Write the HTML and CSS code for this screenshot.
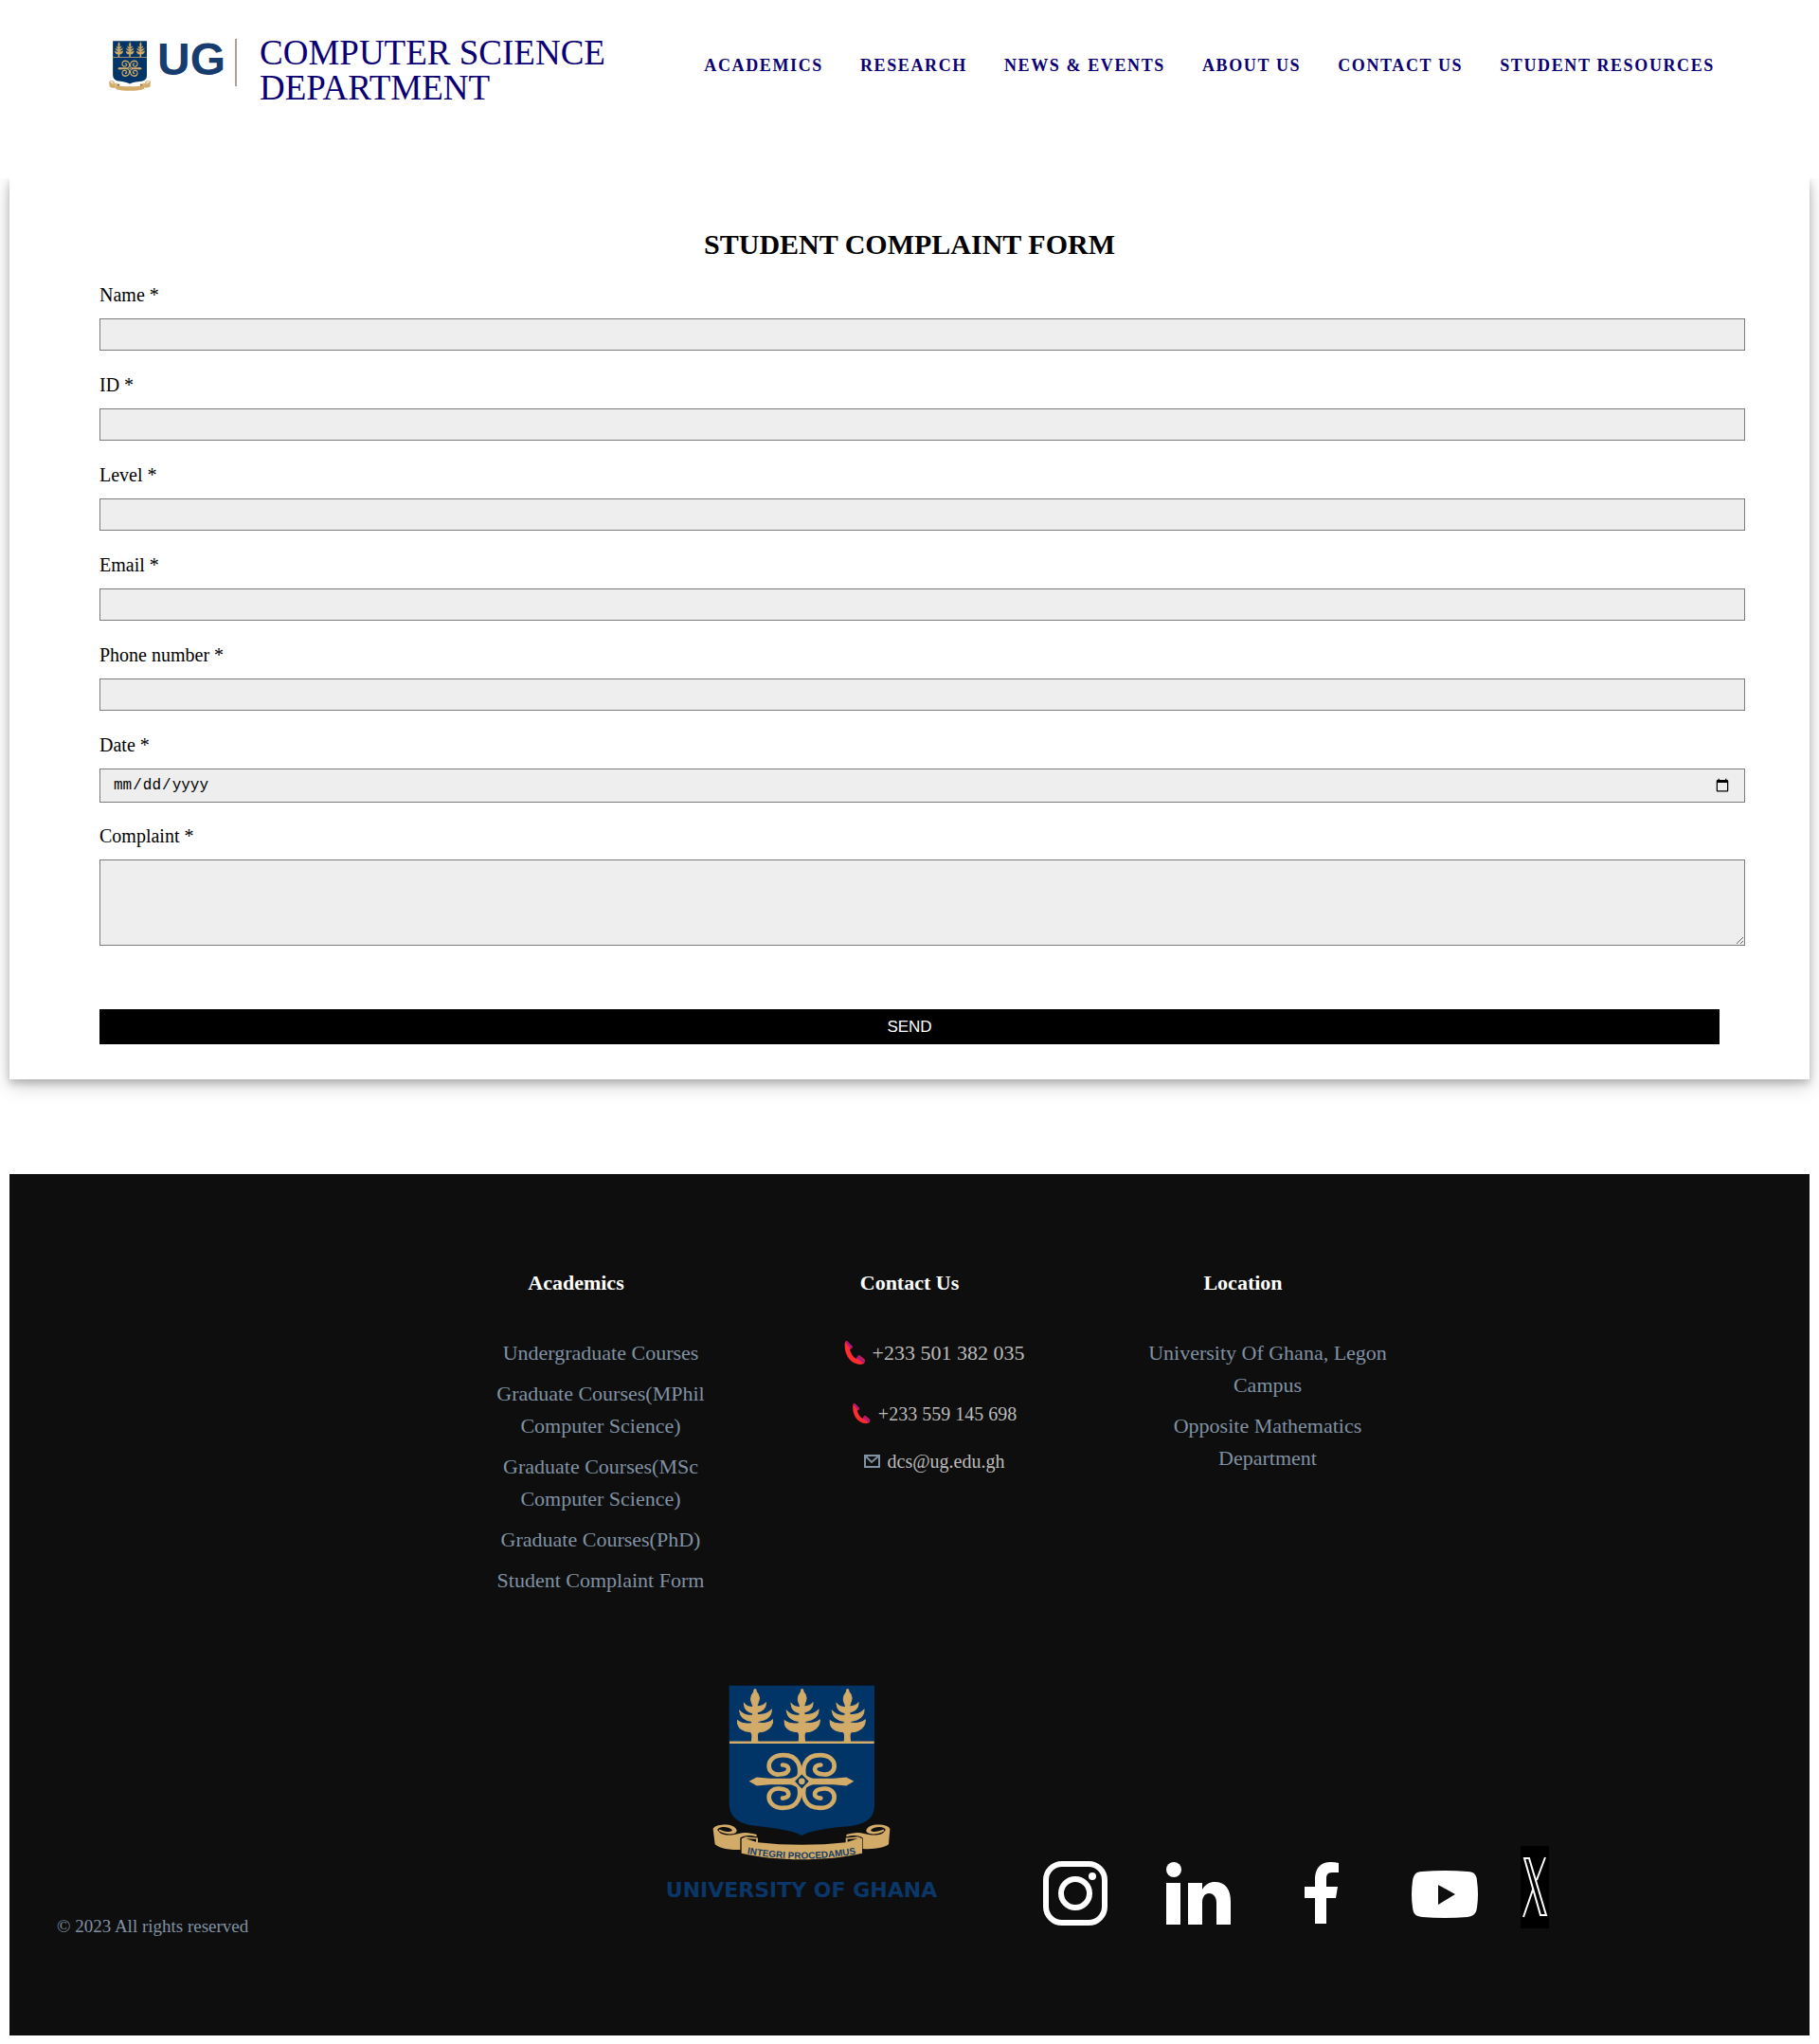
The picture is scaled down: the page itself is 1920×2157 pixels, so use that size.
FILE: index.html
```html
<!DOCTYPE html>
<html lang="en">
<head>
<meta charset="utf-8">
<meta name="viewport" content="width=device-width, initial-scale=1">
<title>Student Complaint Form</title>
<link rel="stylesheet" href="styles.css">
</head>
<body>
<svg class="sprite" aria-hidden="true">
  <symbol id="tree" viewBox="0 0 114 168">
    <path stroke="#d2ab68" stroke-width="3" d="M57 0c3 0 4 5 4 9 8 8 11 18 8 27-2 8-5 13-6 20 10-1 21-4 28-12 1 16-10 25-27 30v8c16 0 33-3 45-16 0 20-17 32-43 36v5c15 3 34 1 48-10-1 24-20 38-44 39-8 1-6 18-4 32H46c2-15 4-32-5-33C18 134 1 124 0 99c14 10 31 13 47 9v-6C24 99 10 90 8 69c11 12 28 16 41 14v-7C34 73 23 63 22 46c7 8 18 12 29 12-1-8-6-15-7-23-1-9 2-17 9-25 0-5 1-10 4-10z"/>
  </symbol>
  <symbol id="crest" viewBox="218 54 564 554" preserveAspectRatio="none">
    <path class="shield" d="M271 56H731V432C731 476 706 492 655 500 588 506 530 513 501 530 470 513 416 508 348 499 296 490 271 470 271 425Z"/>
    <g class="gold">
      <use href="#tree" x="296" y="67" width="114" height="168"/>
      <use href="#tree" x="445" y="67" width="114" height="168"/>
      <use href="#tree" x="589" y="67" width="114" height="168"/>
      <path d="M272 232H730V240H272Z"/>
      <path d="M334 359L358 346 400 350H462C477 349 490 340 494 329H508C512 340 525 349 540 350H602L642 346 666 359 642 373 602 369H540C525 370 512 379 508 390H494C490 379 477 370 462 369H400L358 373Z"/>
    </g>
    <g class="scrolls">
      <path d="M492 345C499 318 494 276 442 276 382 276 386 341 430 337 470 334 464 306 440 307"/>
      <path d="M509 345C502 318 507 276 559 276 619 276 615 341 571 337 531 334 537 306 561 307"/>
      <path d="M492 374C499 401 494 443 442 443 382 443 386 378 430 382 470 385 464 413 440 412"/>
      <path d="M509 374C502 401 507 443 559 443 619 443 615 378 571 382 531 385 537 413 561 412"/>
    </g>
    <path class="shield" d="M501 337L523 359 501 382 479 359Z"/>
    <circle class="gold" cx="501" cy="359" r="10"/>
    <g class="gold">
      <path d="M220 510C222 492 290 488 295 514 296 528 262 530 238 516L240 511C260 520 284 520 280 512 270 500 236 500 234 512 244 534 280 530 302 524 322 518 342 523 358 527V534C336 528 318 528 306 538V575C270 576 240 570 226 558Z"/>
      <path d="M780 510C778 492 710 488 705 514 704 528 738 530 762 516L760 511C740 520 716 520 720 512 730 500 764 500 766 512 756 534 720 530 698 524 678 518 658 523 642 527V534C664 528 682 528 694 538V572C730 575 764 568 776 558Z"/>
      <path d="M310 540L324 534 362 538V552C450 562 552 562 640 552V538L678 534 692 540V586C580 612 420 612 310 586Z"/>
    </g>
    <path class="fold" d="M324 540L356 541V550Z M678 540L646 541V550Z"/>
  </symbol>
  <symbol id="handset" viewBox="0 0 22 26">
    <path fill="#ff2d2d" d="M1 1C-1 12 5 24 17 25L21 24 22 20 16 15 13 19C9 17 7 13 6 9L9 7 3 0Z"/>
    <path fill="#b3167c" d="M3 0L9 6 7 9 1 1Z M15 15L22 21 21 24 13 18Z"/>
  </symbol>
</svg>

<header class="site-header">
  <a class="brand" href="#">
    <svg class="brand-crest" aria-hidden="true"><use href="#crest"/></svg>
    <span class="brand-mark">UG</span>
    <span class="brand-name">COMPUTER SCIENCE<br>DEPARTMENT</span>
  </a>
  <nav class="site-nav">
    <a href="#">ACADEMICS</a>
    <a href="#">RESEARCH</a>
    <a href="#">NEWS &amp; EVENTS</a>
    <a href="#">ABOUT US</a>
    <a href="#">CONTACT US</a>
    <a href="#">STUDENT RESOURCES</a>
  </nav>
</header>

<main class="card">
  <h1>STUDENT COMPLAINT FORM</h1>
  <form>
    <label for="name">Name *</label>
    <input id="name" type="text">
    <label for="sid">ID *</label>
    <input id="sid" type="text">
    <label for="level">Level *</label>
    <input id="level" type="text">
    <label for="email">Email *</label>
    <input id="email" type="email">
    <label for="phone">Phone number *</label>
    <input id="phone" type="tel">
    <label for="date">Date *</label>
    <input id="date" type="date">
    <label for="complaint">Complaint *</label>
    <textarea id="complaint"></textarea>
    <button type="submit">SEND</button>
  </form>
</main>

<footer class="site-footer">
  <div class="columns">
    <section>
      <h2>Academics</h2>
      <ul>
        <li><a href="#">Undergraduate Courses</a></li>
        <li><a href="#">Graduate Courses(MPhil Computer Science)</a></li>
        <li><a href="#">Graduate Courses(MSc Computer Science)</a></li>
        <li><a href="#">Graduate Courses(PhD)</a></li>
        <li><a href="#">Student Complaint Form</a></li>
      </ul>
    </section>
    <section>
      <h2>Contact Us</h2>
      <ul class="contact">
        <li class="main-line"><svg width="22" height="26" aria-hidden="true"><use href="#handset"/></svg>+233 501 382 035</li>
        <li class="second-line"><svg width="20" height="22" aria-hidden="true"><use href="#handset"/></svg>+233 559 145 698</li>
        <li><svg width="17" height="14" viewBox="0 0 17 14" fill="none" stroke="#8091a3" stroke-width="2" aria-hidden="true"><path d="M1 1H16V13H1Z M1 1L8 8 16 1"/></svg>dcs@ug.edu.gh</li>
      </ul>
    </section>
    <section>
      <h2>Location</h2>
      <ul>
        <li>University Of Ghana, Legon Campus</li>
        <li>Opposite Mathematics Department</li>
      </ul>
    </section>
  </div>
  <div class="bottom">
    <p class="copyright">© 2023 All rights reserved</p>
    <svg class="university" viewBox="0 0 300 228" role="img" aria-label="University of Ghana">
      <use href="#crest" x="56" y="0" width="188" height="185"/>
      <path id="motto" fill="none" d="M86 177Q150 190 214 177"/>
      <text class="motto"><textPath href="#motto" startOffset="50%">INTEGRI PROCEDAMUS</textPath></text>
      <text class="uni-name" x="150" y="224">UNIVERSITY OF GHANA</text>
    </svg>
    <div class="social">
      <a href="#" aria-label="Instagram"><svg width="100" height="74" viewBox="0 0 100 74"><rect x="19" y="6" width="62" height="62" rx="17" fill="none" stroke="#fff" stroke-width="6"/><circle cx="50" cy="37" r="15" fill="none" stroke="#fff" stroke-width="6"/><circle cx="68" cy="19" r="4" fill="#fff"/></svg></a>
      <a href="#" aria-label="LinkedIn"><svg width="100" height="74" viewBox="0 0 100 74" fill="#fff"><circle cx="24" cy="12" r="8"/><path d="M16 26H31V70H16Z M39 26H54V33C57 28 61 25 67 25 79 25 84 33 84 46V70H69V47C69 34 54 34 54 46V70H39Z"/></svg></a>
      <a href="#" aria-label="Facebook"><svg width="100" height="74" viewBox="0 0 100 74" fill="#fff"><path d="M32 30H43V23C43 9 50 4 60 4Q64 4 68 5V15H61C56 15 55 18 55 22V30H67L65 42H55V69H43V42H32Z"/></svg></a>
      <a href="#" aria-label="YouTube"><svg width="100" height="74" viewBox="0 0 100 74"><path fill="#fff" d="M26 14Q50 12 74 14C81 14 84 18 84 24Q86 38 84 52C83 59 80 61 74 62Q50 64 26 62C19 61 17 59 16 52Q14 38 16 24C17 18 19 14 26 14Z"/><path fill="#0e0e0e" d="M43 28L61 38 43 49Z"/></svg></a>
      <a href="#" aria-label="X"><svg width="30" height="87" viewBox="0 0 30 87" fill="none" stroke="#fff"><path fill="#000" stroke="none" d="M0 0H30V87H0Z"/><path stroke-width="2" d="M26 12L17 36 M13 46L3 75 M4 13H9L27 73H21Z"/></svg></a>
    </div>
  </div>
</footer>
</body>
</html>
```
FILE: styles.css
```css
* { box-sizing: border-box; }
body { margin: 0; background: #fff; font-family: "Liberation Serif", "Times New Roman", serif; }
a { color: inherit; text-decoration: none; }
.sprite { position: absolute; width: 0; height: 0; }

.shield { fill: #013567; }
.gold { fill: #d2ab68; }
.fold { fill: #0e0e0e; }
.scrolls { fill: none; stroke: #d2ab68; stroke-width: 14; stroke-linecap: round; }

.site-header {
  position: relative;
  z-index: 1;
  display: flex;
  justify-content: space-between;
  align-items: flex-start;
  min-height: 188px;
  padding: 37px 110px 0 115px;
  background: #fff;
  color: #0a0073;
}
.brand { display: flex; }
.brand-crest { width: 44px; height: 53px; margin: 6px 7px 0 0; }
.brand-mark {
  height: 50px;
  margin-top: 4px;
  padding-right: 10px;
  border-right: 2px solid #aaa29a;
  color: #163d6e;
  font: bold 48px/44px "Liberation Sans", Arial, sans-serif;
}
.brand-name { margin-left: 24px; font-size: 37px; line-height: 37px; }
.site-nav { display: flex; gap: 39px; padding-top: 21px; font-size: 18px; line-height: 22px; font-weight: bold; letter-spacing: 0.09em; }

.card {
  margin: 0 10px;
  padding: 52px 0 37px 95px;
  box-shadow: 0 4px 8px rgba(0, 0, 0, 0.2), 0 6px 20px rgba(0, 0, 0, 0.2);
}
h1 { margin: 0 95px 24px 0; text-align: center; font-size: 30px; line-height: 36px; }
form { display: flex; flex-direction: column; align-items: flex-start; }
label { margin-bottom: 13px; font-size: 20px; line-height: 23px; }
input, textarea {
  width: calc(100% - 68px);
  height: 34px;
  margin: 0 0 25px;
  padding: 0 13px;
  border: 1px solid #7b7b7b;
  border-radius: 0;
  background: #eee;
  font: 16px "Liberation Mono", monospace;
}
input[type="date"] { height: 36px; margin-bottom: 24px; }
textarea { height: 91px; margin-bottom: 67px; }
button {
  width: calc(100% - 95px);
  height: 37px;
  border: 0;
  background: #000;
  color: #fff;
  font: 17px "Liberation Sans", Arial, sans-serif;
}

.site-footer { margin: 100px 10px 10px; padding: 98px 50px 104px; background: #0e0e0e; color: #8091a3; }
.columns { display: grid; grid-template-columns: repeat(3, 1fr); max-width: 1056px; min-height: 441px; margin: 0 auto; font-size: 22px; line-height: 34px; text-align: center; }
h2 { margin: 0 0 40px; color: #fff; font-size: 22px; line-height: 34px; }
ul { margin: 0; padding: 0 12px 0 64px; list-style: none; }
li { margin-bottom: 9px; }
.contact { color: #bbb; font-size: 20px; }
.contact li { display: flex; justify-content: center; align-items: center; gap: 8px; margin-bottom: 16px; }
.contact .main-line { margin-bottom: 30px; font-size: 22px; }

.bottom { display: grid; grid-template-columns: 636fr 389fr 775fr; align-items: end; }
.copyright { margin: 0; font-size: 19px; line-height: 22px; }
.university { width: 300px; height: 228px; margin-bottom: 38px; }
.motto { fill: #173d63; font: bold 10px "Liberation Sans", Arial, sans-serif; text-anchor: middle; }
.uni-name { fill: #0a3768; font: bold 22px "DejaVu Sans", sans-serif; text-anchor: middle; }
.social { display: flex; align-items: flex-end; gap: 30px; margin-bottom: 9px; }
.social svg { display: block; }
```
